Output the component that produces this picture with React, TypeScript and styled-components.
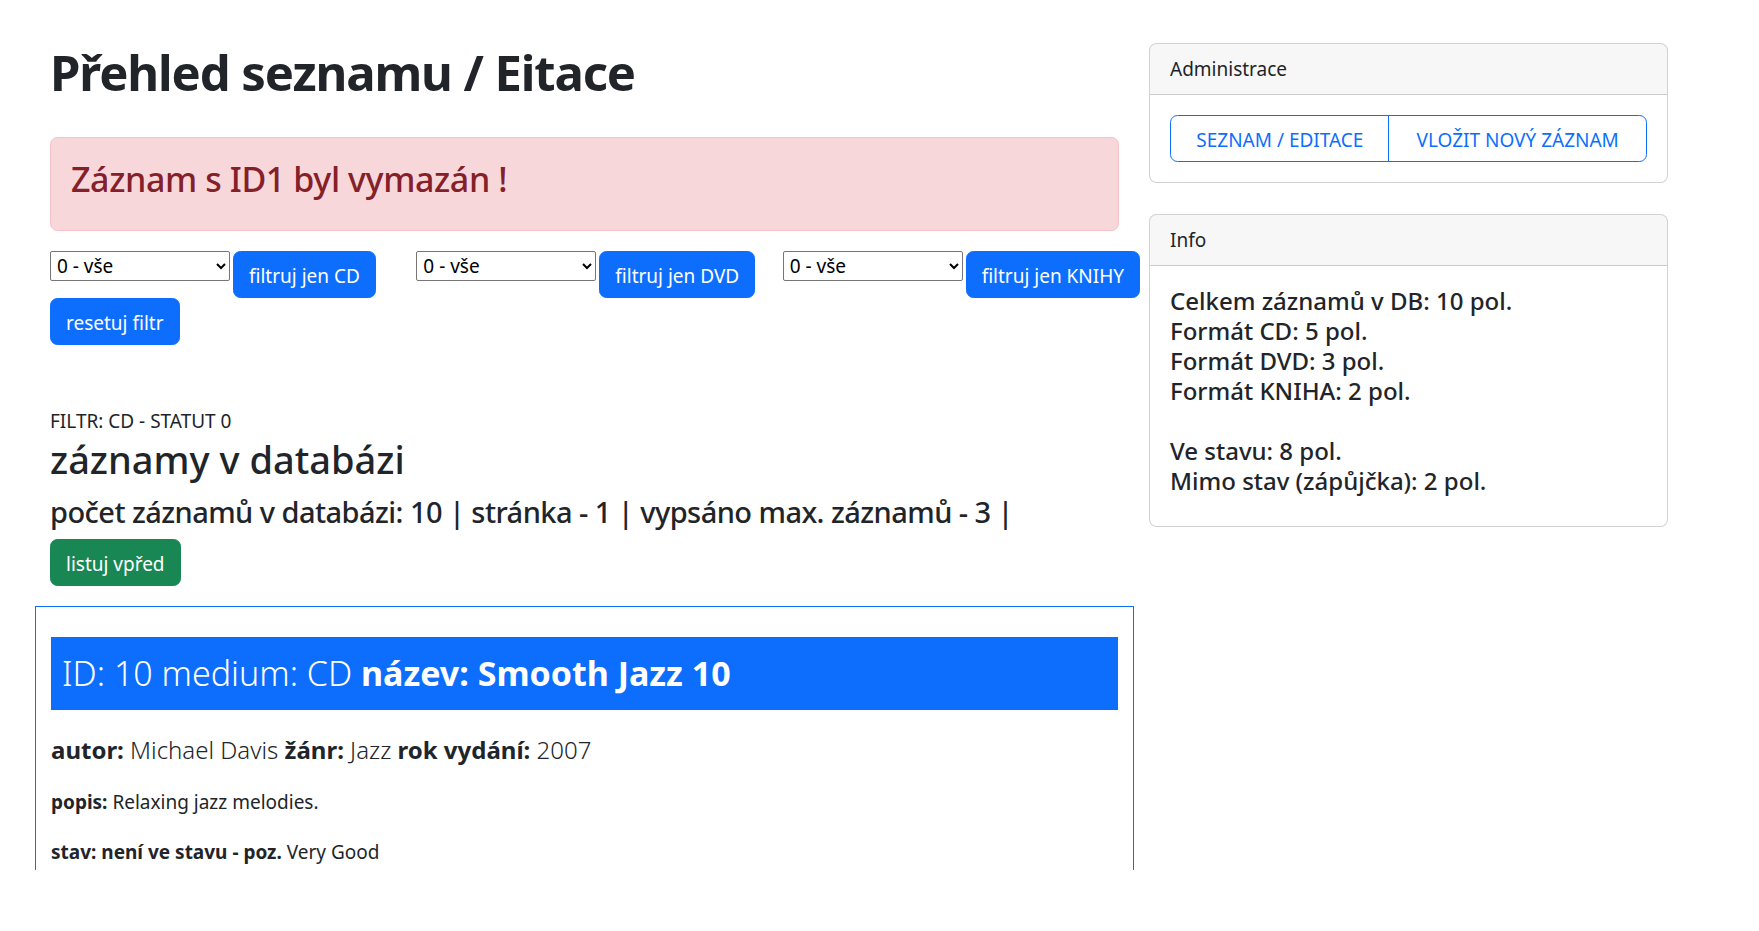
import React from "react";
import styled, { createGlobalStyle, css } from "styled-components";

const GlobalStyle = createGlobalStyle`
  html, body { margin: 0; padding: 0; background: #fff; }
  body {
    font-family: "Noto Sans", "Open Sans", sans-serif;
    font-size: 20px;
    line-height: 1.5;
    color: #212529;
  }
  * { box-sizing: border-box; }
`;

const Page = styled.div`
  display: grid;
  grid-template-columns: 1099px 549px;
  padding: 43px 0 0 35px;
  height: 931px;
  overflow: hidden;
`;

const MainCol = styled.main`
  padding: 0 15px;
  min-width: 0;
`;

const SideCol = styled.aside`
  padding: 0 15px;
  display: flex;
  flex-direction: column;
  gap: 31px;
  align-items: stretch;
`;

const Title = styled.h1`
  margin: 0 0 35px;
  font-size: 49px;
  font-weight: 700;
  line-height: 1.2;
  letter-spacing: -1.1px;
`;

const Alert = styled.div`
  background: #f8d7da;
  border: 1.25px solid #f5c2c7;
  color: #842029;
  border-radius: 7.5px;
  padding: 20px;
  margin-bottom: 20px;
`;

const AlertHeading = styled.h3`
  margin: 0 0 10px;
  font-size: 34px;
  font-weight: 500;
  line-height: 42px;
  letter-spacing: -0.4px;
`;

const FilterGrid = styled.div`
  display: grid;
  grid-template-columns: repeat(3, 366.33px);
  margin: 0 -15px;
`;

const FilterGroup = styled.div`
  padding: 0 15px;
  display: flex;
  align-items: flex-start;
  gap: 3px;
  white-space: nowrap;
`;

const Select = styled.select`
  width: 180px;
  height: 30px;
  font-family: "Noto Sans", sans-serif;
  font-size: 19px;
  color: #000;
  background: #fff;
  border: 1px solid #767676;
  border-radius: 2px;
  padding: 0 2px;
  flex: none;
`;

const Button = styled.button<{ $variant?: "primary" | "success" }>`
  display: inline-block;
  flex: none;
  font-family: "Noto Sans", sans-serif;
  font-size: 19px;
  line-height: 30px;
  padding: 9px 15px 6px;
  border-radius: 7.5px;
  border: 1.25px solid transparent;
  color: #fff;
  cursor: pointer;
  white-space: nowrap;
  ${(p) =>
    p.$variant === "success"
      ? css`
          background: #198754;
          border-color: #198754;
        `
      : css`
          background: #0d6efd;
          border-color: #0d6efd;
        `}
`;

const ResetRow = styled.div`
  display: flex;
`;

const FilterLabel = styled.div`
  margin-top: 63px;
  font-size: 19px;
  line-height: 26px;
  text-transform: uppercase;
`;

const SectionTitle = styled.h2`
  margin: 1px 0 11px;
  font-size: 38px;
  font-weight: 500;
  line-height: 48px;
`;

const CountLine = styled.h4`
  margin: 0 0 9px;
  font-size: 29px;
  font-weight: 500;
  line-height: 36px;
  letter-spacing: -0.55px;
`;

const PagerRow = styled.div`
  display: flex;
  margin-bottom: 20px;
`;

const RecordBox = styled.section`
  margin: 0 -15px;
  border: 1px solid #0d6efd;
  border-bottom: 0;
  padding: 30px 15px 0;
  height: 264px;
  overflow: hidden;
`;

const RecordHeader = styled.h3`
  margin: 0 0 25px;
  background: #0d6efd;
  color: #fff;
  padding: 15.5px 11px;
  font-size: 34px;
  line-height: 42px;
  font-weight: 700;
`;

const Light = styled.span`
  font-weight: 300;
`;

const MetaLine = styled.h5`
  margin: 0 0 24px;
  font-size: 24px;
  line-height: 30px;
  font-weight: 300;
  b { font-weight: 700; }
`;

const SmallLine = styled.p`
  margin: 0 0 24px;
  font-size: 19px;
  line-height: 26px;
  font-weight: 400;
  b { font-weight: 700; }
`;

const Card = styled.div`
  border: 1.25px solid rgba(0, 0, 0, 0.175);
  border-radius: 7.5px;
  overflow: hidden;
  background: #fff;
`;

const CardHeader = styled.div`
  background: rgba(0, 0, 0, 0.03);
  border-bottom: 1.25px solid rgba(0, 0, 0, 0.175);
  padding: 10px 20px;
  font-size: 19px;
  line-height: 30px;
`;

const CardBody = styled.div`
  padding: 20px;
`;

const BtnGroup = styled.div`
  display: flex;
`;

const OutlineButton = styled.button<{ $width: number }>`
  font-family: "Noto Sans", sans-serif;
  font-size: 19px;
  line-height: 30px;
  padding: 8.5px 0 6.5px;
  width: ${(p) => p.$width}px;
  text-align: center;
  text-transform: uppercase;
  color: #0d6efd;
  background: #fff;
  border: 1.25px solid #0d6efd;
  white-space: nowrap;
  &:first-child {
    border-radius: 7.5px 0 0 7.5px;
  }
  &:last-child {
    border-radius: 0 7.5px 7.5px 0;
    margin-left: -1.25px;
  }
`;

const InfoText = styled.h5`
  margin: 0 0 10px;
  font-size: 24px;
  line-height: 30px;
  font-weight: 500;
`;

const filters = ["CD", "DVD", "KNIHY"];

export default function App() {
  return (
    <>
      <GlobalStyle />
      <Page>
        <MainCol>
          <Title>Přehled seznamu / Eitace</Title>
          <Alert>
            <AlertHeading>Záznam s ID1 byl vymazán !</AlertHeading>
          </Alert>
          <FilterGrid>
            {filters.map((f) => (
              <FilterGroup key={f}>
                <Select defaultValue="0">
                  <option value="0">0 - vše</option>
                  <option value="1">1 - ve stavu</option>
                  <option value="2">2 - mimo stav</option>
                </Select>
                <Button>filtruj jen {f}</Button>
              </FilterGroup>
            ))}
          </FilterGrid>
          <ResetRow>
            <Button>resetuj filtr</Button>
          </ResetRow>
          <FilterLabel>Filtr: CD - statut 0</FilterLabel>
          <SectionTitle>záznamy v databázi</SectionTitle>
          <CountLine>
            počet záznamů v databázi: 10 | stránka - 1 | vypsáno max. záznamů - 3 |
          </CountLine>
          <PagerRow>
            <Button $variant="success">listuj vpřed</Button>
          </PagerRow>
          <RecordBox>
            <RecordHeader>
              <Light>ID: 10 medium: CD </Light>název: Smooth Jazz 10
            </RecordHeader>
            <MetaLine>
              <b>autor:</b> Michael Davis <b>žánr:</b> Jazz <b>rok vydání:</b> 2007
            </MetaLine>
            <SmallLine>
              <b>popis:</b> Relaxing jazz melodies.
            </SmallLine>
            <SmallLine>
              <b>stav: není ve stavu - poz.</b> Very Good
            </SmallLine>
          </RecordBox>
        </MainCol>
        <SideCol>
          <Card>
            <CardHeader>Administrace</CardHeader>
            <CardBody>
              <BtnGroup>
                <OutlineButton $width={220}>Seznam / editace</OutlineButton>
                <OutlineButton $width={259}>Vložit nový záznam</OutlineButton>
              </BtnGroup>
            </CardBody>
          </Card>
          <Card>
            <CardHeader>Info</CardHeader>
            <CardBody>
              <InfoText>
                Celkem záznamů v DB: 10 pol.
                <br />
                Formát CD: 5 pol.
                <br />
                Formát DVD: 3 pol.
                <br />
                Formát KNIHA: 2 pol.
                <br />
                <br />
                Ve stavu: 8 pol.
                <br />
                Mimo stav (zápůjčka): 2 pol.
              </InfoText>
            </CardBody>
          </Card>
        </SideCol>
      </Page>
    </>
  );
}
